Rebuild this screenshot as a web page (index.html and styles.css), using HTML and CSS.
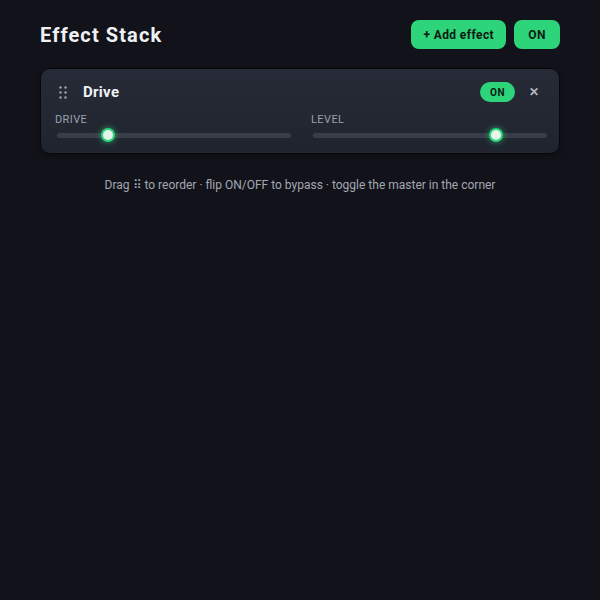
FILE: index.html
```html
<!DOCTYPE html>
<html lang="en">
<head>
    <meta charset="UTF-8">
    <meta name="viewport" content="width=device-width, initial-scale=1.0">
    <title>Effect Stack</title>
    <link rel="stylesheet" href="styles.css">
</head>
<body>
    <div class="app">
        <div class="top-bar">
            <h1>Effect Stack</h1>
            <div class="top-actions">
                <button class="btn">+ Add effect</button>
                <button class="btn btn-master">ON</button>
            </div>
        </div>

        <div class="effect-card">
            <div class="effect-head">
                <span class="drag-handle">
                    <svg width="8" height="13" viewBox="0 0 8 13">
                        <circle cx="1.5" cy="1.5" r="1.2"/>
                        <circle cx="6.5" cy="1.5" r="1.2"/>
                        <circle cx="1.5" cy="6.5" r="1.2"/>
                        <circle cx="6.5" cy="6.5" r="1.2"/>
                        <circle cx="1.5" cy="11.5" r="1.2"/>
                        <circle cx="6.5" cy="11.5" r="1.2"/>
                    </svg>
                </span>
                <span class="effect-name">Drive</span>
                <button class="pill">ON</button>
                <button class="remove-btn">&#x2715;</button>
            </div>
            <div class="params">
                <label class="param">
                    <span class="param-label">Drive</span>
                    <input type="range" class="slider" min="0" max="100" value="20">
                </label>
                <label class="param">
                    <span class="param-label">Level</span>
                    <input type="range" class="slider" min="0" max="100" value="80">
                </label>
            </div>
        </div>

        <p class="hint">Drag &#x283F; to reorder · flip ON/OFF to bypass · toggle the master in the corner</p>
    </div>
</body>
</html>
```

FILE: styles.css
```css
body {
    margin: 0;
    background: #12131a;
    font-family: Roboto, "Liberation Sans", sans-serif;
    color: #e8eaf0;
}
.app {
    padding: 20px 40px;
}
.top-bar {
    display: flex;
    justify-content: space-between;
    align-items: center;
}
h1 {
    margin: 0;
    font-size: 20px;
    font-weight: 700;
    letter-spacing: 1.1px;
    color: #eef0f4;
}
.top-actions {
    display: flex;
    gap: 8px;
}
.btn {
    height: 29px;
    padding: 0 12px;
    border: none;
    border-radius: 8px;
    background: #2ed47a;
    color: #0c1a12;
    font-family: inherit;
    font-size: 12px;
    font-weight: 700;
    letter-spacing: 0.4px;
    cursor: pointer;
}
.btn-master {
    min-width: 46px;
}
.effect-card {
    margin-top: 19px;
    padding: 12px 12px 10px 14px;
    border: 1px solid #07080c;
    border-radius: 10px;
    background: linear-gradient(180deg, #272b37 0%, #20242e 100%);
    box-shadow: 0 2px 6px rgba(0,0,0,0.35);
}
.effect-head {
    display: flex;
    align-items: center;
    height: 22px;
}
.drag-handle {
    display: flex;
    margin-left: 4px;
    fill: #9ca2ae;
}
.effect-name {
    margin-left: 16px;
    font-size: 15px;
    font-weight: 700;
    letter-spacing: 0.3px;
    color: #f0f2f6;
    flex: 1;
}
.pill {
    width: 35px;
    height: 20px;
    border: none;
    border-radius: 10px;
    background: #2ed47a;
    color: #0c1a12;
    font-family: inherit;
    font-size: 10px;
    font-weight: 700;
    letter-spacing: 0.4px;
    padding: 0;
    cursor: pointer;
}
.remove-btn {
    margin: 0 5px 0 11px;
    width: 16px;
    padding: 0;
    border: none;
    background: none;
    color: #b4b9c4;
    font-size: 12px;
    font-weight: 700;
    cursor: pointer;
}
.params {
    display: grid;
    grid-template-columns: 1fr 1fr;
    gap: 20px;
    margin-top: 10px;
}
.param {
    display: flex;
    flex-direction: column;
}
.param-label {
    font-size: 11px;
    text-transform: uppercase;
    letter-spacing: 0.4px;
    color: #9aa0ac;
}
.slider {
    -webkit-appearance: none;
    appearance: none;
    margin: 1px 0 0 2px;
    width: calc(100% - 2px);
    height: 16px;
    background: transparent;
}
.slider::-webkit-slider-runnable-track {
    height: 5px;
    border-radius: 3px;
    background: #383d49;
}
.slider::-webkit-slider-thumb {
    -webkit-appearance: none;
    width: 14px;
    height: 14px;
    margin-top: -4.5px;
    border-radius: 50%;
    background: #e6f4ec;
    border: 2px solid #2ed47a;
    box-sizing: border-box;
    box-shadow: 0 0 6px rgba(46,212,122,0.7);
}
.hint {
    margin: 24px 0 0;
    text-align: center;
    font-size: 12px;
    color: #a3a7b1;
}
```
